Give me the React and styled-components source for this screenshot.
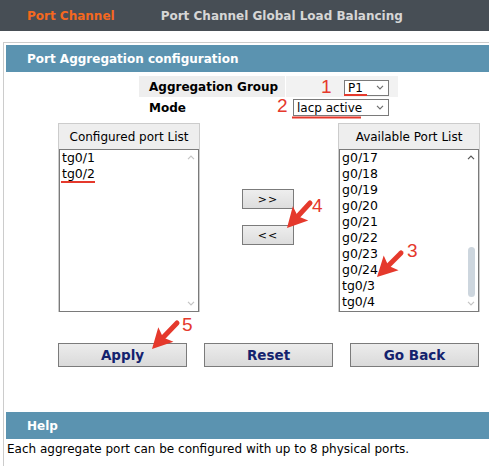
import React from "react";
import styled, { createGlobalStyle } from "styled-components";

const Global = createGlobalStyle`
  html, body { margin: 0; padding: 0; background: #fff; }
  body { font-family: "DejaVu Sans", Verdana, sans-serif; color: #000; }
  * { box-sizing: border-box; }
`;

const Page = styled.div`
  position: relative;
  width: 489px;
  height: 466px;
  overflow: hidden;
  display: flex;
  flex-direction: column;
`;

const TopBar = styled.div`
  height: 31px;
  background: #474e55;
  display: flex;
  align-items: center;
  padding-left: 27px;
  gap: 46px;
  flex-shrink: 0;
`;

const Tab = styled.span`
  font-size: 12px;
  font-weight: bold;
  color: ${(p) => (p.$active ? "#f5681f" : "#d6d6d6")};
  white-space: nowrap;
`;

const Panel = styled.div`
  margin-top: 11px;
  margin-left: 3px;
  border-top: 1px solid #cccccc;
  border-left: 1px solid #cccccc;
  padding: 2px 0 0 2px;
  flex: 1;
  display: flex;
  flex-direction: column;
`;

const SectionHeader = styled.div`
  height: 27px;
  background: #5b93b0;
  color: #fff;
  font-size: 12px;
  font-weight: bold;
  display: flex;
  align-items: center;
  padding-left: 21px;
  flex-shrink: 0;
  margin-top: ${(p) => p.$top || 0}px;
`;

const FormTable = styled.div`
  margin: 4px 0 0 133px;
  display: grid;
  grid-template-columns: 147px 112px;
  grid-auto-rows: 21px;
  width: 259px;
`;

const LabelCell = styled.div`
  background: ${(p) => (p.$shade ? "#eeeeee" : "transparent")};
  font-size: 12px;
  font-weight: bold;
  display: flex;
  align-items: center;
  padding-left: 10px;
  margin-right: 1px;
`;

const ValueCell = styled.div`
  background: ${(p) => (p.$shade ? "#f2f2f2" : "transparent")};
  display: flex;
  align-items: center;
  justify-content: flex-end;
  padding-right: 9px;
`;

const Select = styled.div`
  width: ${(p) => p.$w}px;
  height: ${(p) => p.$h}px;
  border: 1px solid #7a7a7a;
  background: #fff;
  display: flex;
  align-items: center;
  justify-content: space-between;
  padding: 0 4px 0 3px;
  font-size: 12px;
  color: #000;
  margin-top: ${(p) => p.$mt || 0}px;
`;

const Chevron = ({ color = "#6e6e6e", up = false, w = 8 }) => (
  <svg width={w} height={5} viewBox="0 0 8 5" style={{ display: "block" }}>
    <polyline
      points={up ? "1,4.2 4,1.2 7,4.2" : "1,0.8 4,3.8 7,0.8"}
      fill="none"
      stroke={color}
      strokeWidth="1.2"
    />
  </svg>
);

const ListsRow = styled.div`
  margin: 5px 0 0 52px;
  display: flex;
  align-items: flex-start;
`;

const ListColumn = styled.div`
  width: 142px;
  border: 1px solid #cccccc;
  border-bottom: none;
  display: flex;
  flex-direction: column;
`;

const ListTitle = styled.div`
  height: 25px;
  background: #eeeeee;
  font-size: 12px;
  display: flex;
  align-items: center;
  justify-content: center;
`;

const ListBox = styled.div`
  height: 163px;
  border: 1px solid #7a7a7a;
  background: #fff;
  display: flex;
`;

const Items = styled.div`
  flex: 1;
  padding: 0 0 0 2px;
  overflow: hidden;
`;

const Item = styled.div`
  font-size: 12.5px;
  line-height: 16px;
  height: 16px;
  color: #000;
  white-space: nowrap;
`;

const ScrollBar = styled.div`
  width: 14px;
  display: flex;
  flex-direction: column;
  align-items: center;
  justify-content: space-between;
  padding: 5px 0 5px 0;
`;

const Thumb = styled.div`
  width: 7px;
  height: 50px;
  border-radius: 4px;
  background: #cdd6de;
  margin-top: auto;
  margin-bottom: 4px;
`;

const MoveButtons = styled.div`
  width: 52px;
  margin: 66px 44px 0 42px;
  display: flex;
  flex-direction: column;
  gap: 16px;
`;

const SmallButton = styled.div`
  height: 20px;
  border: 1px solid #7b7b7b;
  background: linear-gradient(#eeeeee, #dddddd);
  font-size: 11px;
  letter-spacing: 1px;
  display: flex;
  align-items: center;
  justify-content: center;
  color: #000;
`;

const ActionRow = styled.div`
  margin: 31px 0 0 52px;
  display: flex;
  gap: 17px;
`;

const ActionButton = styled.div`
  width: 129px;
  height: 24px;
  border: 1px solid #7b7b7b;
  background: linear-gradient(#ececec, #dadada);
  font-size: 13.5px;
  font-weight: bold;
  color: #14226e;
  display: flex;
  align-items: center;
  justify-content: center;
`;

const HelpText = styled.div`
  font-size: 12px;
  padding: 3px 0 0 1px;
  color: #000;
  white-space: nowrap;
`;

const Marker = styled.span`
  position: absolute;
  left: ${(p) => p.$x}px;
  top: ${(p) => p.$y}px;
  font-family: "Liberation Sans", Arial, sans-serif;
  font-size: 19px;
  line-height: 19px;
  color: #e5392c;
`;

const Overlay = styled.svg`
  position: absolute;
  left: 0;
  top: 0;
  pointer-events: none;
`;

function arrowShapes(tx, ty, px, py) {
  const dx = px - tx;
  const dy = py - ty;
  const len = Math.hypot(dx, dy);
  const ux = dx / len;
  const uy = dy / len;
  const nx = -uy;
  const ny = ux;
  const head = 20;
  const half = 10.5;
  const bx = px - ux * head;
  const by = py - uy * head;
  const sx = bx + ux * 3;
  const sy = by + uy * 3;
  return {
    shaft: `${tx},${ty} ${sx},${sy}`,
    head: `${px},${py} ${bx + nx * half},${by + ny * half} ${bx + ux * 4},${by + uy * 4} ${bx - nx * half},${by - ny * half}`,
  };
}

const Arrow = ({ t, p }) => {
  const a = arrowShapes(t[0], t[1], p[0], p[1]);
  return (
    <g>
      <polyline points={a.shaft} stroke="#e5392c" strokeWidth="5" fill="none" strokeLinecap="round" />
      <polygon points={a.head} fill="#e5392c" />
    </g>
  );
};

const configured = ["tg0/1", "tg0/2"];
const available = ["g0/17", "g0/18", "g0/19", "g0/20", "g0/21", "g0/22", "g0/23", "g0/24", "tg0/3", "tg0/4"];

export default function App() {
  return (
    <>
      <Global />
      <Page>
        <TopBar>
          <Tab $active>Port Channel</Tab>
          <Tab>Port Channel Global Load Balancing</Tab>
        </TopBar>
        <Panel>
          <SectionHeader>Port Aggregation configuration</SectionHeader>
          <FormTable>
            <LabelCell $shade>Aggregation Group</LabelCell>
            <ValueCell $shade>
              <Select $w={45} $h={16} $mt={2}>
                <span>P1</span>
                <Chevron />
              </Select>
            </ValueCell>
            <LabelCell>Mode</LabelCell>
            <ValueCell>
              <Select $w={96} $h={17}>
                <span>lacp active</span>
                <Chevron />
              </Select>
            </ValueCell>
          </FormTable>
          <ListsRow>
            <ListColumn>
              <ListTitle>Configured port List</ListTitle>
              <ListBox>
                <Items>
                  {configured.map((c) => (
                    <Item key={c}>{c}</Item>
                  ))}
                </Items>
                <ScrollBar>
                  <Chevron up color="#c4c4c4" />
                  <Chevron color="#c4c4c4" />
                </ScrollBar>
              </ListBox>
            </ListColumn>
            <MoveButtons>
              <SmallButton>&gt;&gt;</SmallButton>
              <SmallButton>&lt;&lt;</SmallButton>
            </MoveButtons>
            <ListColumn>
              <ListTitle>Available Port List</ListTitle>
              <ListBox>
                <Items>
                  {available.map((c) => (
                    <Item key={c}>{c}</Item>
                  ))}
                </Items>
                <ScrollBar>
                  <Chevron up color="#555555" />
                  <Thumb />
                  <Chevron color="#c4c4c4" />
                </ScrollBar>
              </ListBox>
            </ListColumn>
          </ListsRow>
          <ActionRow>
            <ActionButton>Apply</ActionButton>
            <ActionButton>Reset</ActionButton>
            <ActionButton>Go Back</ActionButton>
          </ActionRow>
          <SectionHeader $top={45}>Help</SectionHeader>
          <HelpText>Each aggregate port can be configured with up to 8 physical ports.</HelpText>
        </Panel>

        <Overlay width="489" height="466" viewBox="0 0 489 466">
          <line x1="344" y1="95" x2="367" y2="95" stroke="#e5392c" strokeWidth="2" />
          <line x1="292" y1="117.5" x2="361" y2="117.5" stroke="#e5392c" strokeWidth="2" />
          <line x1="61" y1="182" x2="95" y2="182" stroke="#e5392c" strokeWidth="2" />
          <Arrow t={[310, 203]} p={[287, 228]} />
          <Arrow t={[401, 253]} p={[377, 277]} />
          <Arrow t={[177, 323]} p={[152, 349]} />
        </Overlay>
        <Marker $x={321} $y={77}>1</Marker>
        <Marker $x={277} $y={96}>2</Marker>
        <Marker $x={407} $y={241}>3</Marker>
        <Marker $x={312} $y={196}>4</Marker>
        <Marker $x={182} $y={315}>5</Marker>
      </Page>
    </>
  );
}
